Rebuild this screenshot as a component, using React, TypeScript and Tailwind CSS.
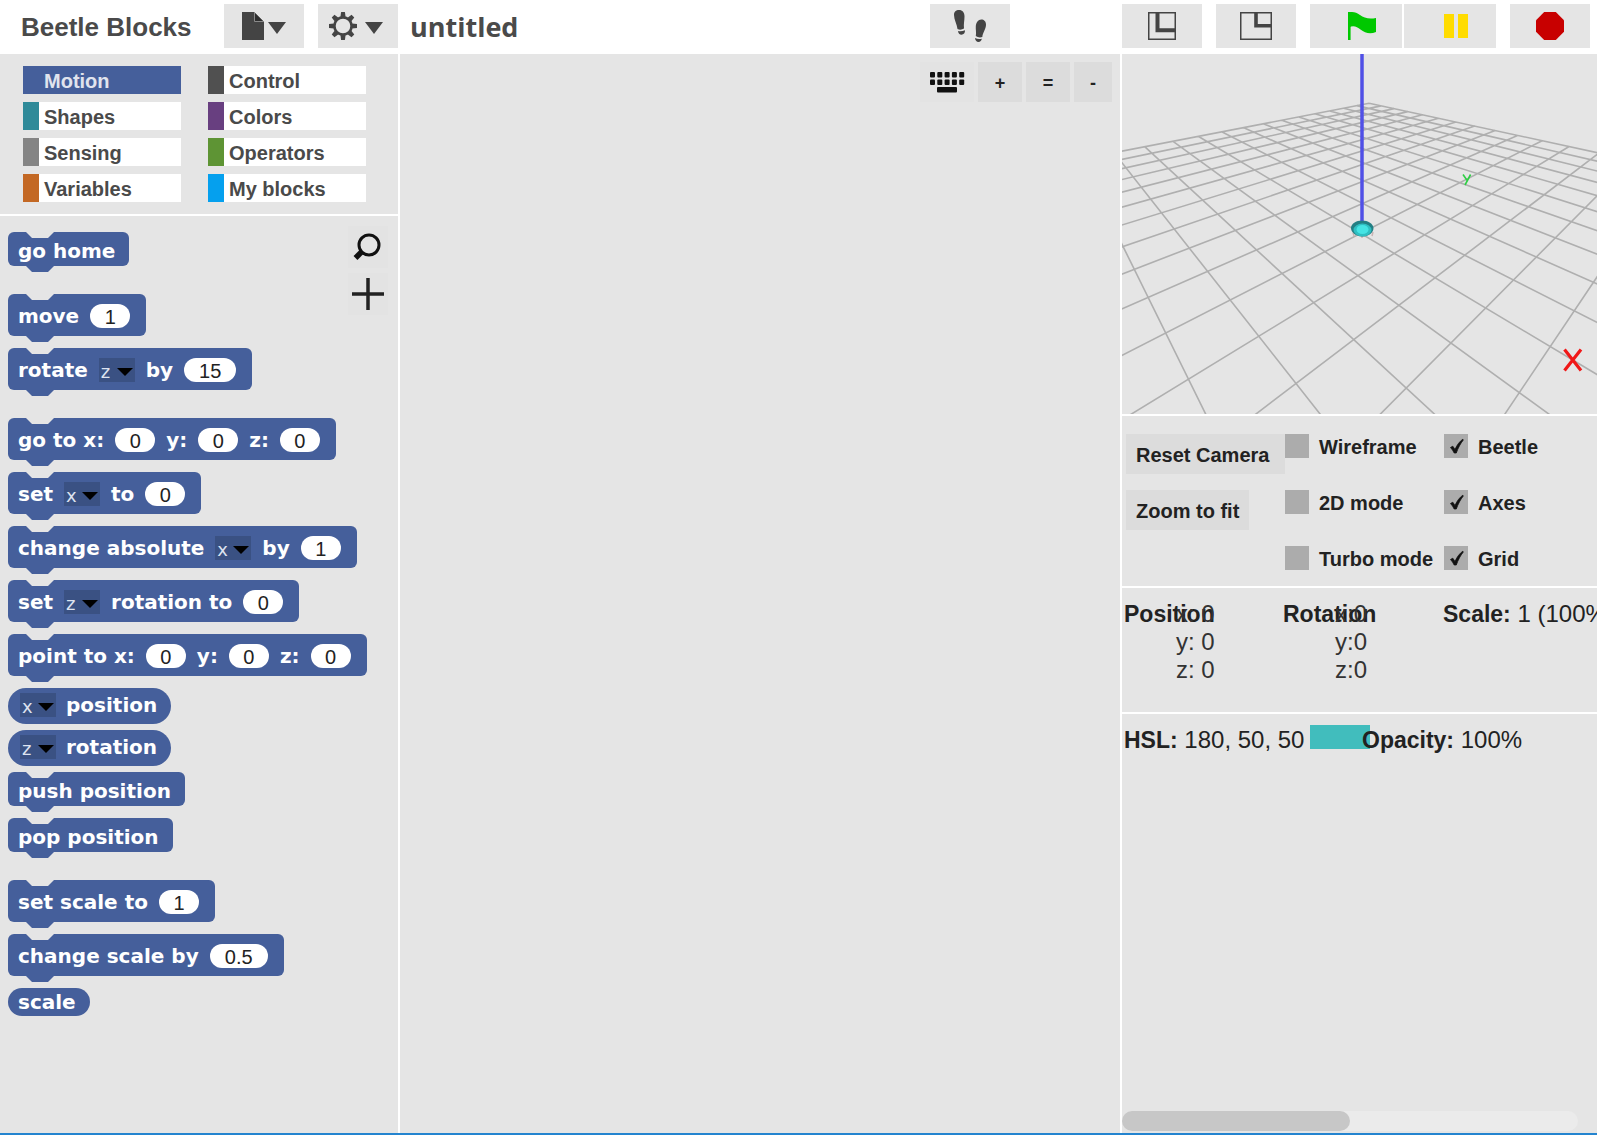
import React from "react";

const INK = "#444444";

/* ---------- header ---------- */

function HeaderButton({
  label,
  className = "w-20",
  children,
}: {
  label: string;
  className?: string;
  children: React.ReactNode;
}) {
  return (
    <button
      type="button"
      aria-label={label}
      className={`flex h-11 shrink-0 items-center justify-center bg-[#e5e5e5] ${className}`}
    >
      {children}
    </button>
  );
}

function Caret() {
  return (
    <svg width="18" height="16" viewBox="0 0 18 16" aria-hidden="true">
      <path d="M0 4H18L9 16Z" fill={INK} />
    </svg>
  );
}

function FileIcon() {
  return (
    <svg width="22" height="28" viewBox="0 0 22 28" aria-hidden="true">
      <path d="M0 0H12L22 10V28H0Z" fill={INK} />
      <path d="M12.5 0V9.5H22" fill="none" stroke="#8a8a8a" strokeWidth="1" />
      <path d="M13 1L21 9H13Z" fill="#2e2e2e" />
    </svg>
  );
}

function GearIcon() {
  const angles = [0, 45, 90, 135, 180, 225, 270, 315];
  return (
    <svg width="28" height="28" viewBox="-14 -14 28 28" aria-hidden="true">
      <circle r="8.6" fill="none" stroke={INK} strokeWidth="2.6" />
      {angles.map((a) => (
        <path key={a} d="M-2.6 -9L-1.9 -14H1.9L2.6 -9Z" fill={INK} transform={`rotate(${a})`} />
      ))}
    </svg>
  );
}

function FootprintsIcon() {
  return (
    <svg width="36" height="36" viewBox="0 0 36 36" fill={INK} aria-hidden="true">
      <path d="M2 7C2 3.500 4 2 7 2C10.500 2 12.500 4.500 12.500 8.500C12.500 12.500 11.500 16 12 20.500C10 21.800 7.500 22 5.500 21C5 16 2 12 2 7Z" />
      <path d="M6 23C8 23.700 10.500 23.300 13 22.300C13.200 25 11.700 26.700 9.500 26.700C7.500 26.700 6.200 25.300 6 23Z" />
      <path d="M34 16.500C34 13.500 32 11.500 29.300 11.500C26 11.500 24.200 14.500 23.800 18C23.500 21.500 24.500 24.500 23.800 28C25.500 29.300 28 29.800 30.300 29C30.800 24.500 34 21 34 16.500Z" />
      <path d="M23 30C25 31 27.300 31.200 29.800 30.700C29.600 32.500 28.300 34 26.500 34C24.500 34 23.100 32.300 23 30Z" />
    </svg>
  );
}

function NormalStageIcon() {
  return (
    <svg width="28" height="28" viewBox="0 0 28 28" aria-hidden="true">
      <rect x="0.75" y="0.75" width="26.500" height="26.500" fill="none" stroke={INK} strokeWidth="1.500" />
      <path d="M9.500 1V18.200H27" fill="none" stroke={INK} strokeWidth="4" />
    </svg>
  );
}

function SmallStageIcon() {
  return (
    <svg width="32" height="28" viewBox="0 0 32 28" aria-hidden="true">
      <rect x="0.75" y="0.75" width="30.500" height="26.500" fill="none" stroke={INK} strokeWidth="1.500" />
      <path d="M16 1V13.800H31" fill="none" stroke={INK} strokeWidth="3.600" />
    </svg>
  );
}

function FlagIcon() {
  return (
    <svg width="28" height="28" viewBox="0 0 28 28" fill="#00c800" aria-hidden="true">
      <path d="M0 0H2.600V28H0Z" />
      <path d="M1 0.500C5 -0.600 8.500 0.500 12 3C16 6 21 7.500 28 6V20C22 22.500 17 21 12.500 17.500C9 14.500 5 13 1 15.500Z" />
    </svg>
  );
}

function PauseIcon() {
  return (
    <svg width="24" height="24" viewBox="0 0 24 24" fill="#ffdc00" aria-hidden="true">
      <path d="M0 0H10V24H0ZM14 0H24V24H14Z" />
    </svg>
  );
}

function StopIcon() {
  return (
    <svg width="28" height="28" viewBox="0 0 28 28" fill="#c80000" aria-hidden="true">
      <path d="M8.200 0H19.800L28 8.200V19.800L19.800 28H8.200L0 19.800V8.200Z" />
    </svg>
  );
}

function Header() {
  return (
    <header className="flex h-[54px] shrink-0 items-start bg-white pt-1">
      <div className="flex h-11 w-[400px] shrink-0 items-center pl-[21px]">
        <h1 className="flex-1 pt-0.5 text-[26px] leading-[44px] font-bold text-[#4a4a4a]">Beetle Blocks</h1>
        <div className="flex gap-3.5 pr-0.5">
          <HeaderButton label="File menu" className="w-20 gap-1">
            <FileIcon />
            <Caret />
          </HeaderButton>
          <HeaderButton label="Settings menu" className="w-20 gap-2 pr-1">
            <GearIcon />
            <Caret />
          </HeaderButton>
        </div>
      </div>
      <div className="flex h-11 min-w-0 flex-1 items-center justify-between pr-[112px] pl-2.5">
        <h2 className="pt-0.5 font-['Open_Sans',sans-serif] text-[27px] leading-[44px] font-bold text-[#4a4a4a]">untitled</h2>
        <HeaderButton label="Visible stepping">
          <FootprintsIcon />
        </HeaderButton>
      </div>
      <div className="flex w-[475px] shrink-0 gap-3.5">
        <HeaderButton label="Stage size">
          <NormalStageIcon />
        </HeaderButton>
        <HeaderButton label="Small stage">
          <SmallStageIcon />
        </HeaderButton>
        <div className="flex gap-0.5">
          <HeaderButton label="Start" className="w-[92px] pl-3">
            <FlagIcon />
          </HeaderButton>
          <HeaderButton label="Pause" className="w-[92px] pl-3">
            <PauseIcon />
          </HeaderButton>
        </div>
        <HeaderButton label="Stop">
          <StopIcon />
        </HeaderButton>
      </div>
    </header>
  );
}

/* ---------- categories ---------- */

const categories = [
  { name: "Motion", swatch: "bg-[#455f9b]", active: true },
  { name: "Control", swatch: "bg-[#505050]" },
  { name: "Shapes", swatch: "bg-[#2f8a99]" },
  { name: "Colors", swatch: "bg-[#683f80]" },
  { name: "Sensing", swatch: "bg-[#848484]" },
  { name: "Operators", swatch: "bg-[#5e9434]" },
  { name: "Variables", swatch: "bg-[#c36824]" },
  { name: "My blocks", swatch: "bg-[#05a0ee]" },
];

function Categories() {
  return (
    <nav className="grid h-40 shrink-0 grid-cols-[158px_158px] content-start gap-x-[27px] gap-y-2 bg-[#e5e5e5] pt-3 pl-[23px]">
      {categories.map((c) => (
        <button
          key={c.name}
          type="button"
          className={`flex h-7 items-stretch text-left text-[20px] leading-[31px] font-bold ${
            c.active ? "bg-[#455f9b] text-[#e0e4ee]" : "bg-white text-[#4a4a4a]"
          }`}
        >
          <span className={`w-4 ${c.swatch}`} />
          <span className="pl-[5px]">{c.name}</span>
        </button>
      ))}
    </nav>
  );
}

/* ---------- palette ---------- */

type Part = string | { num: string } | { pick: string };
type BlockSpec = { kind: "command" | "reporter"; parts: Part[]; gap: string };

const blocks: BlockSpec[] = [
  { kind: "command", parts: ["go home"], gap: "" },
  { kind: "command", parts: ["move", { num: "1" }], gap: "mt-7" },
  { kind: "command", parts: ["rotate", { pick: "z" }, "by", { num: "15" }], gap: "mt-3" },
  { kind: "command", parts: ["go to x:", { num: "0" }, "y:", { num: "0" }, "z:", { num: "0" }], gap: "mt-7" },
  { kind: "command", parts: ["set", { pick: "x" }, "to", { num: "0" }], gap: "mt-3" },
  { kind: "command", parts: ["change absolute", { pick: "x" }, "by", { num: "1" }], gap: "mt-3" },
  { kind: "command", parts: ["set", { pick: "z" }, "rotation to", { num: "0" }], gap: "mt-3" },
  { kind: "command", parts: ["point to x:", { num: "0" }, "y:", { num: "0" }, "z:", { num: "0" }], gap: "mt-3" },
  { kind: "reporter", parts: [{ pick: "x" }, "position"], gap: "mt-3" },
  { kind: "reporter", parts: [{ pick: "z" }, "rotation"], gap: "mt-1.5" },
  { kind: "command", parts: ["push position"], gap: "mt-1.5" },
  { kind: "command", parts: ["pop position"], gap: "mt-3" },
  { kind: "command", parts: ["set scale to", { num: "1" }], gap: "mt-7" },
  { kind: "command", parts: ["change scale by", { num: "0.5" }], gap: "mt-3" },
  { kind: "reporter", parts: ["scale"], gap: "mt-3" },
];

const slotWidth: Record<number, string> = { 1: "w-10", 2: "w-[52px]", 3: "w-[58px]" };

function BlockPart({ part, name }: { part: Part; name: string }) {
  if (typeof part === "string") return <span className="leading-6 whitespace-nowrap">{part}</span>;
  if ("num" in part)
    return (
      <input
        type="text"
        aria-label={`${name} value`}
        defaultValue={part.num}
        className={`h-6 rounded-full bg-white pt-0.5 text-center font-['Liberation_Sans',sans-serif] text-[20px] leading-5 font-normal text-[#222] ${slotWidth[part.num.length]}`}
      />
    );
  return (
    <span className="relative flex h-6 w-9 bg-[#3a5183]">
      <select
        aria-label={`${name} axis`}
        defaultValue={part.pick}
        className="h-6 w-9 appearance-none bg-transparent pt-0.5 pl-0.5 text-[18px] leading-6 font-normal text-[#dde3f0]"
      >
        <option>x</option>
        <option>y</option>
        <option>z</option>
      </select>
      <svg width="16" height="8" viewBox="0 0 16 8" className="pointer-events-none absolute top-2.5 right-0.5" aria-hidden="true">
        <path d="M0 0H16L8 8Z" fill="#000" />
      </svg>
    </span>
  );
}

function Block({ spec }: { spec: BlockSpec }) {
  const simple = spec.parts.every((p) => typeof p === "string");
  const name = spec.parts.filter((p) => typeof p === "string").join(" ");
  const command = spec.kind === "command";
  const shape = command
    ? simple
      ? "h-[34px] rounded-md pt-1 pl-2.5 pr-3.5"
      : "h-[42px] gap-[11px] rounded-md pt-0.5 pl-2.5 pr-4"
    : simple
      ? "h-7 rounded-full px-2.5 pr-3.5"
      : "h-9 gap-2.5 rounded-full pb-0.5 pl-3 pr-3.5";
  return (
    <div
      className={`relative flex w-max items-center bg-[#455f9b] font-['DejaVu_Sans',sans-serif] text-[20px] font-bold text-white ${shape} ${spec.gap}`}
    >
      {command && (
        <>
          <svg width="28" height="6" viewBox="0 0 28 6" className="absolute top-0 left-[18px]" aria-hidden="true">
            <path d="M0 0H28L22 6H6Z" fill="#e5e5e5" />
          </svg>
          <svg width="28" height="6" viewBox="0 0 28 6" className="absolute top-full left-[18px]" aria-hidden="true">
            <path d="M0 0H28L22 6H6Z" fill="#455f9b" />
          </svg>
        </>
      )}
      {spec.parts.map((p, i) => (
        <BlockPart key={i} part={p} name={name} />
      ))}
    </div>
  );
}

function Palette() {
  return (
    <section aria-label="Blocks" className="relative min-h-0 flex-1 overflow-hidden bg-[#e5e5e5] pt-4 pl-2">
      {blocks.map((b, i) => (
        <Block key={i} spec={b} />
      ))}
      <div className="absolute top-2.5 right-2.5 flex flex-col gap-[5px]">
        <button type="button" aria-label="Find blocks" className="flex h-[42px] w-10 items-center justify-center bg-[#e3e3e3] pr-0.5">
          <svg width="28" height="28" viewBox="0 0 28 28" aria-hidden="true">
            <circle cx="16" cy="12" r="10" fill="none" stroke="#111" strokeWidth="3" />
            <path d="M9 18.500L2.500 25" stroke="#111" strokeWidth="5.500" />
          </svg>
        </button>
        <button type="button" aria-label="Make a block" className="flex h-[42px] w-10 items-center justify-center bg-[#e3e3e3]">
          <svg width="32" height="32" viewBox="0 0 32 32" aria-hidden="true">
            <path d="M16 0V32M0 16H32" stroke="#222" strokeWidth="3.500" />
          </svg>
        </button>
      </div>
    </section>
  );
}

/* ---------- scripting area ---------- */

function KeyboardIcon() {
  const cols = [0, 1, 2, 3, 4];
  return (
    <svg width="36" height="22" viewBox="0 0 36 22" fill="#111" aria-hidden="true">
      {cols.map((c) => (
        <g key={c}>
          <rect x={1 + c * 7.3} y="1" width="5" height="5.500" rx="1" />
          <rect x={1 + c * 7.3} y="8.500" width="5" height="5.500" rx="1" />
        </g>
      ))}
      <rect x="8" y="16" width="20" height="5.500" rx="1" />
    </svg>
  );
}

function ScriptArea() {
  const key = "flex h-10 items-center justify-center bg-[#dcdcdc] pt-0.5 text-[18px] font-bold text-[#222]";
  return (
    <main className="flex min-w-0 flex-1 items-start justify-end gap-1 bg-[#e5e5e5] pt-2 pr-2">
      <button type="button" aria-label="Keyboard entry" className="flex h-10 w-[54px] items-center justify-center bg-[#e3e3e3]">
        <KeyboardIcon />
      </button>
      <button type="button" className={`${key} w-11`}>+</button>
      <button type="button" className={`${key} w-11`}>=</button>
      <button type="button" className={`${key} w-[38px]`}>-</button>
    </main>
  );
}

/* ---------- 3D stage ---------- */

/* Perspective projection of the ground plane onto the 475 x 360 stage. */
function project(u: number, v: number): [number, number] {
  const w = 1 - 0.0885 * u + 0.0813 * v;
  const x = (25.3 * u + 159.8 * v + 752) / w;
  const y = 620 / w - 520;
  return [x / 3 - 12, y / 3 + 146];
}

function gridPath(): string {
  const near = 0.12;
  let d = "";
  for (let k = -10; k <= 10; k++) {
    const uEnd = Math.min(10, (1 + 0.0813 * k - near) / 0.0885);
    const vStart = Math.max(-10, (near - 1 + 0.0885 * k) / 0.0813);
    const ends = [project(-10, k), project(uEnd, k), project(k, 10), project(k, vStart)];
    const s = ends.map(([x, y]) => `${x.toFixed(1)} ${y.toFixed(1)}`);
    d += `M${s[0]}L${s[1]}M${s[2]}L${s[3]}`;
  }
  return d;
}

function Stage() {
  return (
    <svg
      viewBox="0 0 475 360"
      preserveAspectRatio="xMidYMid slice"
      className="block h-[360px] w-full shrink-0 bg-[#e5e5e5]"
      role="img"
      aria-label="Stage"
    >
      <path d={gridPath()} fill="none" stroke="#afafaf" strokeWidth="1.600" />
      <path d="M231 178.500L232 182M251 178L250 182M240 181V184" stroke="#c9b3b3" strokeWidth="1.500" fill="none" />
      <path d="M240 0V170" stroke="#5050e6" strokeWidth="3.500" />
      <path d="M229 174C229 170 234 166.500 240 166.500C246 166.500 251.500 170 251.500 174C251.500 179 246 183 240 182.500C233 182 229 178 229 174Z" fill="#237f84" />
      <ellipse cx="240.500" cy="176" rx="9" ry="6.500" fill="#2fbfc2" />
      <ellipse cx="240.500" cy="175.500" rx="6" ry="4.500" fill="#45e4e4" />
      <path d="M341 120.500L344.800 126M348.600 120.500L343 131" stroke="#2fcf45" strokeWidth="1.600" fill="none" />
      <path d="M442.500 295.500L459 316.500M459 295.500L442.500 316.500" stroke="#f01818" strokeWidth="3.200" fill="none" />
    </svg>
  );
}

function Toggle({ label, on = false, className = "" }: { label: string; on?: boolean; className?: string }) {
  return (
    <label className={`flex h-6 items-center gap-2.5 whitespace-nowrap ${className}`}>
      <span className="relative flex">
        <input type="checkbox" defaultChecked={on} className="h-6 w-6 appearance-none bg-[#acacac]" />
        {on && (
          <svg width="24" height="24" viewBox="0 0 24 24" className="pointer-events-none absolute inset-0" aria-hidden="true">
            <path d="M6.500 13.500L8.800 12.200L11 15.500C13 11 15.500 7.500 18.800 5.200L19.300 6C16.500 9.500 14 14 12.300 19H10.200C9.200 17 8 15 6.500 13.500Z" fill="#111" stroke="#111" strokeWidth="0.8" />
          </svg>
        )}
      </span>
      <span className="pt-0.5 leading-6">{label}</span>
    </label>
  );
}

function Controls() {
  const push = "h-10 bg-[#dcdcdc] px-2.5 pt-0.5 text-left whitespace-nowrap";
  return (
    <section
      aria-label="Stage options"
      className="grid h-[170px] shrink-0 grid-cols-[159px_159px_1fr] grid-rows-[56px_56px_56px] items-start justify-items-start overflow-hidden bg-[#e5e5e5] pt-[18px] pl-1 text-[20px] font-bold text-[#222]"
    >
      <button type="button" className={`${push} w-full`}>Reset Camera</button>
      <Toggle label="Wireframe" />
      <Toggle label="Beetle" on />
      <button type="button" className={push}>Zoom to fit</button>
      <Toggle label="2D mode" />
      <Toggle label="Axes" on />
      <Toggle label="Turbo mode" className="col-start-2" />
      <Toggle label="Grid" on />
    </section>
  );
}

function Vector({ title, rows }: { title: string; rows: string[] }) {
  return (
    <div className="grid">
      <h3 className="col-start-1 row-start-1 text-[23px] font-bold text-[#222]">{title}</h3>
      <div className="col-start-1 row-start-1 pl-[52px] text-[24px] text-[#333]">
        {rows.map((r) => (
          <p key={r}>{r}</p>
        ))}
      </div>
    </div>
  );
}

function Status() {
  return (
    <>
      <section
        aria-label="Beetle status"
        className="grid h-[124px] shrink-0 grid-cols-[159px_160px_1fr] overflow-hidden bg-[#e5e5e5] pt-3 pl-0.5 leading-7 text-[#222]"
      >
        <Vector title="Position" rows={["x: 0", "y: 0", "z: 0"]} />
        <Vector title="Rotation" rows={["x:0", "y:0", "z:0"]} />
        <p className="text-[24px] whitespace-nowrap">
          <b className="text-[23px]">Scale:</b> 1 (100%)
        </p>
      </section>
      <section
        aria-label="Color"
        className="flex min-h-0 flex-1 items-start overflow-hidden bg-[#e5e5e5] pt-2.5 pl-0.5 text-[24px] leading-8 whitespace-nowrap text-[#222]"
      >
        <p className="w-[186px]">
          <b className="text-[23px]">HSL:</b> 180, 50, 50
        </p>
        <span className="mt-px h-6 w-[60px] bg-[#41bdbd]" />
        <p className="-ml-2">
          <b className="text-[23px]">Opacity:</b> 100%
        </p>
      </section>
    </>
  );
}

function ScrollBar() {
  return (
    <div className="-mt-0.5 shrink-0 bg-[#e5e5e5] pr-[19px] pb-0.5">
      <div className="h-5 rounded-full bg-[#ebebeb]">
        <div className="h-5 w-1/2 rounded-full bg-[#c7c7c7]" />
      </div>
    </div>
  );
}

export default function App() {
  return (
    <div className="flex h-screen flex-col overflow-hidden border-b-2 border-[#2484cf] bg-white font-['Liberation_Sans',Arial,sans-serif]">
      <Header />
      <div className="flex min-h-0 flex-1 gap-0.5">
        <aside className="flex w-[398px] shrink-0 flex-col gap-0.5">
          <Categories />
          <Palette />
        </aside>
        <ScriptArea />
        <aside className="flex w-[475px] shrink-0 flex-col gap-0.5">
          <Stage />
          <Controls />
          <Status />
          <ScrollBar />
        </aside>
      </div>
    </div>
  );
}
